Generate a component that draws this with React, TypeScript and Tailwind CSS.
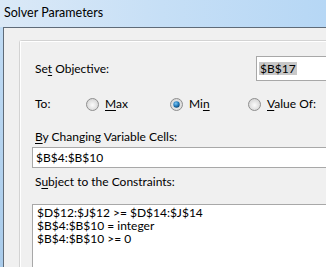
import type { ReactNode } from 'react'

const font = { fontFamily: 'Lato, "Noto Sans", sans-serif' }

function U({ children }: { children: ReactNode }) {
  return <span className="underline underline-offset-2">{children}</span>
}

function Radio({ checked }: { checked?: boolean }) {
  return (
    <svg width="13" height="13" viewBox="0 0 13 13" className="shrink-0">
      <defs>
        <radialGradient id="rf" cx="0.5" cy="0.55" r="0.6">
          <stop offset="0" stopColor="#fbfbfb" />
          <stop offset="1" stopColor="#d0d0d0" />
        </radialGradient>
        <radialGradient id="dot" cx="0.4" cy="0.35" r="0.7">
          <stop offset="0" stopColor="#7cc6f2" />
          <stop offset="0.6" stopColor="#1f77b8" />
          <stop offset="1" stopColor="#0d3f66" />
        </radialGradient>
      </defs>
      <circle cx="6.5" cy="6.5" r="6" fill="url(#rf)" stroke="#8f8f8f" strokeWidth="1" />
      {checked && <circle cx="6.5" cy="6.5" r="3.2" fill="url(#dot)" />}
    </svg>
  )
}

export default function App() {
  return (
    <div className="w-[326px] h-[267px] overflow-hidden bg-[#bcd8f3] text-[12px] text-black" style={font}>
      {/* title bar */}
      <div className="h-[27px] flex items-center pl-[4px] bg-gradient-to-r from-[#dbe9f7] via-[#c6dff6] to-[#b6d7f5] text-[12.5px]">
        Solver Parameters
      </div>
      <div className="flex h-[240px] w-[420px]">
        <div className="w-[3px] bg-gradient-to-b from-[#c0dbf4] to-[#a9cbea]" />
        <div className="flex-1 border-l border-t border-[#5f6b78] bg-[#f0f0f0] pl-[15px] pt-[12px]">
          <div className="h-[300px] rounded-tl-[3px] border-l border-t border-[#d3d3d3] bg-[#f0f0f0]">
            <div className="h-full border-l border-t border-white pl-[11px] pt-[14px]">
              {/* set objective */}
              <div className="flex items-center h-[25px]">
                <span className="ml-[3px] w-[221px]">
                  Se<U>t</U> Objective:
                </span>
                <div className="flex-1 h-[25px] border border-[#a8a8a8] bg-white flex items-center pl-[2px]">
                  <span className="bg-[#c8c8c8] px-[1px] leading-[13px]">$B$17</span>
                </div>
              </div>
              {/* to */}
              <div className="flex items-center h-[20px] mt-[13px]">
                <span className="ml-[3px] w-[51px]">To:</span>
                <Radio />
                <span className="ml-[6px] w-[65px]">
                  <U>M</U>ax
                </span>
                <Radio checked />
                <span className="ml-[6px] w-[59px]">
                  Mi<U>n</U>
                </span>
                <Radio />
                <span className="ml-[6px]">
                  <U>V</U>alue Of:
                </span>
              </div>
              {/* changing cells */}
              <div className="ml-[3px] mt-[16px] h-[14px] leading-[14px]">
                <U>B</U>y Changing Variable Cells:
              </div>
              <div className="mt-[3px] h-[21px] border border-[#a8a8a8] bg-white flex items-center pl-[3px]">
                $B$4:$B$10
              </div>
              {/* constraints */}
              <div className="ml-[3px] mt-[7px] h-[14px] leading-[14px]">
                S<U>u</U>bject to the Constraints:
              </div>
              <div className="mt-[15px] h-[120px] border border-[#a8a8a8] bg-white pl-[4px] pt-[1px] leading-[13px]">
                <div>$D$12:$J$12 &gt;= $D$14:$J$14</div>
                <div>$B$4:$B$10 = integer</div>
                <div>$B$4:$B$10 &gt;= 0</div>
              </div>
            </div>
          </div>
        </div>
      </div>
    </div>
  )
}
